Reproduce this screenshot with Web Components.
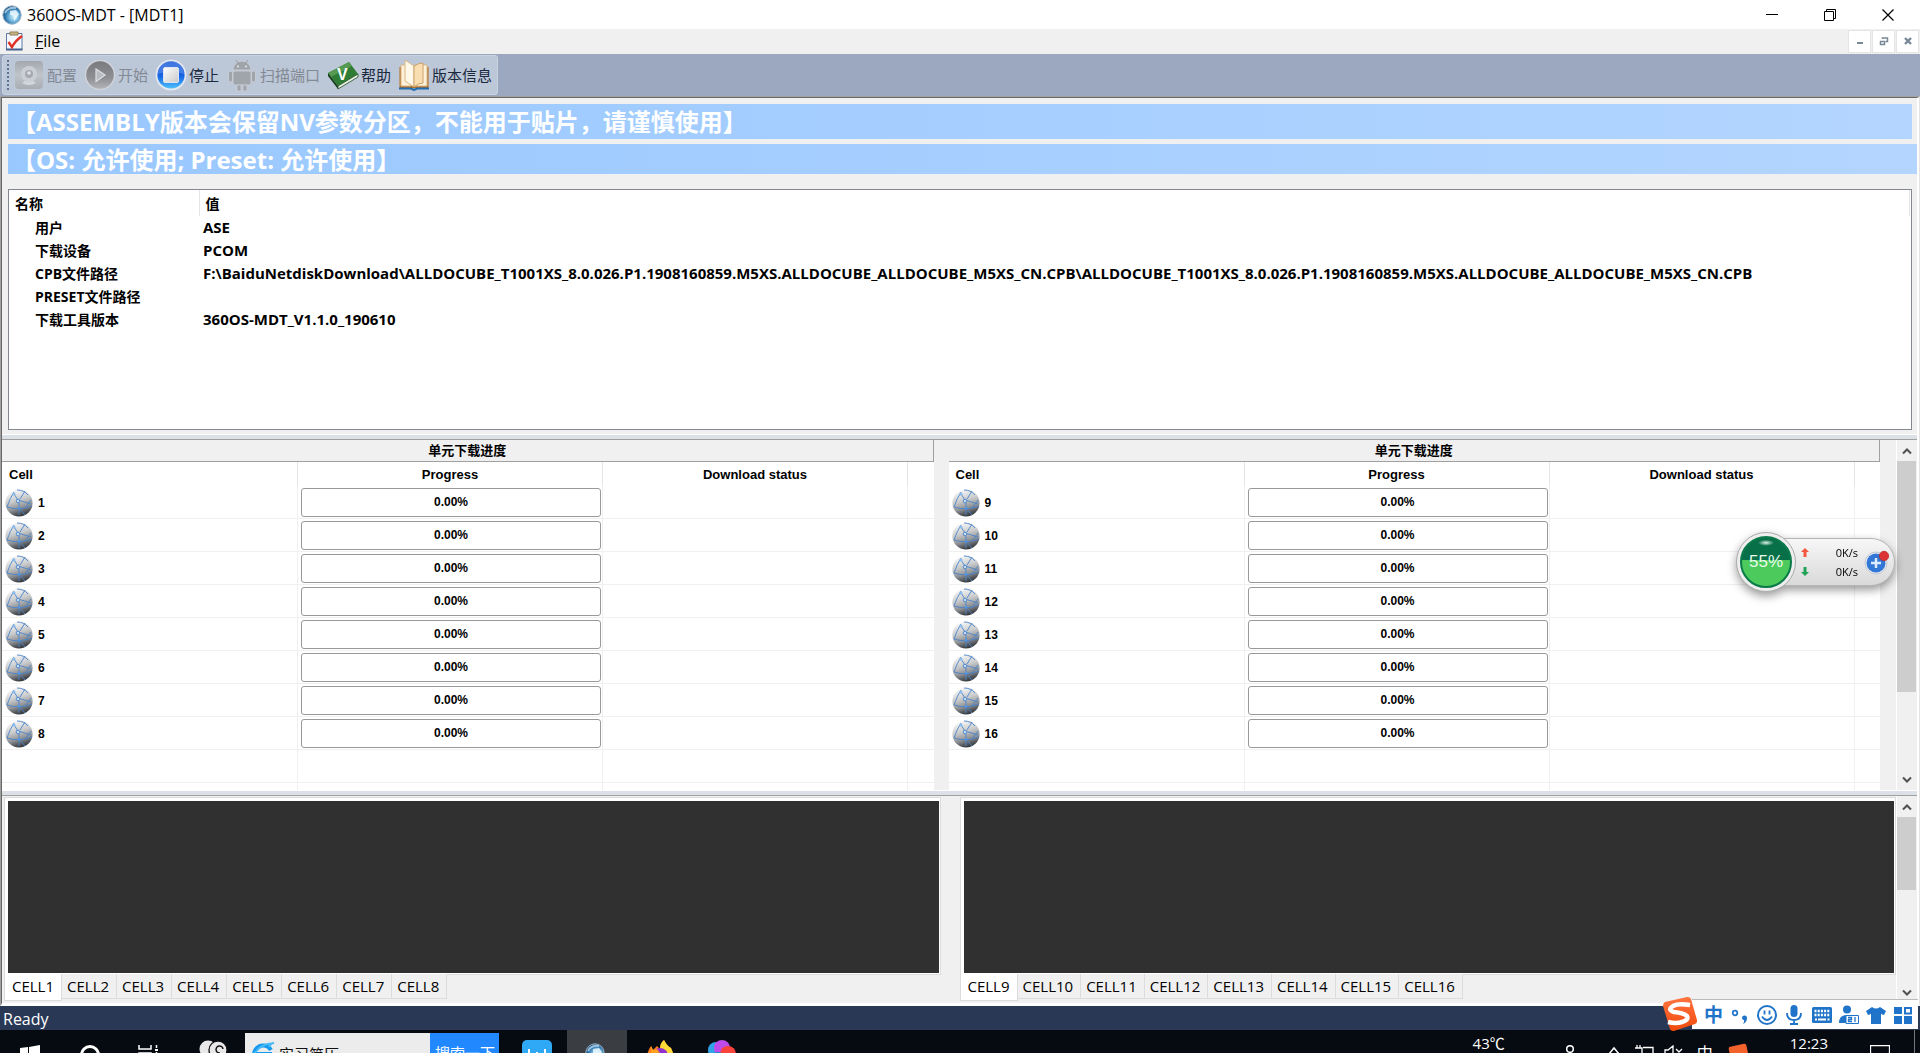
<!DOCTYPE html>
<html lang="zh-CN">
<head>
<meta charset="utf-8">
<title>360OS-MDT - [MDT1]</title>
<style>
    html, body { margin: 0; height: 100%; overflow: hidden; }
    body { font: 16px/20px "Open Sans", "Noto Sans CJK SC", sans-serif; color: #000; background: #f0f0f0; }
</style>
</head>
<body>
<desk-top></desk-top>

<script>
    const ICONS = {
        app: ['0 0 20 20', '<defs><radialGradient id="a" cx=".6" cy=".6" r=".6"><stop offset="0" stop-color="#d5effb"/><stop offset=".45" stop-color="#6fb4dd"/><stop offset=".8" stop-color="#2a70a8"/><stop offset="1" stop-color="#1b5484"/></radialGradient></defs><circle cx="10" cy="10" r="9.200" fill="url(#a)" stroke="#9fb4c6"/><path d="M8 6l6-1 3 4-3 5-2 2v-5l-4-1z" fill="#f2fbff" opacity=".8"/><path d="M3 8q3-6 11-5" stroke="#cfe4f2" stroke-width="2" fill="none" opacity=".7"/>'],
        doc: ['0 0 18 20', '<path d="M1.500 2.500h15.500v16h-15.500z" fill="#f4f7fd" stroke="#5c78a8"/><path d="M1 18.500h16.500" stroke="#45618f" stroke-width="2"/><path d="M5 1h8v3h-8z" fill="#c8b684" stroke="#8e7f56"/><path d="M3.500 11l3.500 5q3-6 10-11" stroke="#e03127" stroke-width="2.500" fill="none"/>'],
        min: ['0 0 14 14', '<path d="M1 6.500h12" stroke="#000"/>'],
        restore: ['0 0 14 14', '<path d="M1.500 3.500h9v9h-9zM3.500 3v-1.500h9v9h-2" fill="none" stroke="#000"/>'],
        close: ['0 0 14 14', '<path d="M1.500 1.500l11 11M12.500 1.500l-11 11" stroke="#000" stroke-width="1.200"/>'],
        smin: ['0 0 10 10', '<path d="M2 7h6" stroke="#788896" stroke-width="2"/>'],
        srestore: ['0 0 10 10', '<path d="M1 5.500h5M1.500 5v3.500h4v-3M3.500 3v-1h5v3.500h-2" fill="none" stroke="#788896" stroke-width="1.500"/>'],
        sclose: ['0 0 10 10', '<path d="M2 2l6 6M8 2l-6 6" stroke="#788896" stroke-width="2.400"/>'],
        camera: ['0 0 30 30', '<defs><linearGradient id="c" x2="0" y2="1"><stop offset="0" stop-color="#a4a8ae"/><stop offset=".5" stop-color="#bfc4ca"/><stop offset="1" stop-color="#a9adb3"/></linearGradient></defs><rect x="1" y="1" width="28" height="28" rx="4" fill="url(#c)"/><path d="M8 23q7-7 14 0-7 4-14 0z" fill="#d3d7dc"/><circle cx="15" cy="14" r="8" fill="#cbcfd5"/><circle cx="15" cy="14" r="4" fill="#a6aab0"/><circle cx="15" cy="13" r="1.800" fill="#dfe1e4"/>'],
        play: ['0 0 32 32', '<defs><linearGradient id="p" x2="0" y2="1"><stop offset="0" stop-color="#77797d"/><stop offset=".6" stop-color="#8d8f93"/><stop offset="1" stop-color="#b4b6ba"/></linearGradient></defs><circle cx="16" cy="16" r="14.500" fill="url(#p)" stroke="#cfd3d9" stroke-width="1.500"/><path d="M12 10l9 6-9 6.500z" fill="#b8bbc0" stroke="#dcdfe3" stroke-width="1.200"/>'],
        stop: ['0 0 32 32', '<defs><linearGradient id="s" x2="0" y2="1"><stop offset="0" stop-color="#0c3eb8"/><stop offset=".55" stop-color="#1767e4"/><stop offset="1" stop-color="#54c9ff"/></linearGradient><linearGradient id="t" x2="1" y2="1"><stop offset="0" stop-color="#fff"/><stop offset="1" stop-color="#c9c9cb"/></linearGradient></defs><circle cx="16" cy="16" r="14.500" fill="url(#s)" stroke="#e3e8f0" stroke-width="1.800"/><path d="M3 15a13 13 0 0126 0q-13-5-26 0z" fill="#5d91ef" opacity=".65"/><rect x="8.500" y="8.500" width="15" height="15" rx="1.500" fill="url(#t)" stroke="#dfe6f3"/>'],
        android: ['0 0 30 34', '<g fill="#a0a5ac" stroke="#ccd1d8" stroke-width=".8"><path d="M6 12a9 9 0 0118 0z"/><rect x="6" y="13" width="18" height="14" rx="2"/><rect x="1.500" y="13" width="4" height="11" rx="2"/><rect x="24.500" y="13" width="4" height="11" rx="2"/><path d="M10 27h4v6h-4zM16 27h4v6h-4z"/></g><path d="M9 2l2.500 3.500M21 2l-2.500 3.500" stroke="#9a9fa6"/><circle cx="11" cy="8.500" r="1" fill="#e4e7eb"/><circle cx="19" cy="8.500" r="1" fill="#e4e7eb"/>'],
        help: ['0 0 32 30', '<path d="M1 13l21-11 9 12-20 12z" fill="#2f7c34"/><path d="M1 13l21-11 3 4-21 11z" fill="#569a52"/><path d="M1 13l10 13v3l-10-13z" fill="#143d19"/><path d="M11 26l20-12v3l-20 12z" fill="#e7eee2" stroke="#1d4d22" stroke-width=".8"/><text x="10" y="20" font-family="Liberation Sans" font-weight="bold" font-size="16" fill="#fff">V</text>'],
        book: ['0 0 32 32', '<path d="M1.500 8h29v21h-29z" fill="#b06d24"/><path d="M3 6h10v21h-10zM17 6h12v21h-12z" fill="#fdf1da" stroke="#d8b888"/><path d="M7 1l9 6v21l-9-6z" fill="#fff8e8" stroke="#d9b684"/><path d="M16 7q5-3 9-3v20q-5 0-9 4z" fill="#f9deb2" stroke="#cda269"/><path d="M1 29.500h12l3 1.500 3-1.500h12" fill="none" stroke="#236cae" stroke-width="2"/>'],
        globe: ['0 0 28 28', '<defs><linearGradient id="g" x1=".35" x2=".65" y2="1"><stop offset="0" stop-color="#fafafa"/><stop offset=".4" stop-color="#c8c9ca"/><stop offset=".68" stop-color="#8c8f93"/><stop offset=".85" stop-color="#54585d"/><stop offset="1" stop-color="#2a2d31"/></linearGradient></defs><circle cx="14" cy="14" r="13.600" fill="url(#g)"/><path d="M9 3Q5 9 2 18M20 2l-5 8M13 11l-4-6M13 11l13 4M14 14v12M2 18q12 4 25-1M14 19l6 7M26 11l-6 8M12 1q7 0 11 5" fill="none" stroke="#4a83cb" stroke-width=".9"/><circle cx="9" cy="5" r="1.600" fill="#8cbdec"/><circle cx="13" cy="12" r="1.800" fill="#c4dff5" stroke="#3f79c4" stroke-width=".8"/><circle cx="14" cy="19" r="1.300" fill="#5798df"/>'],
        up: ['0 0 12 12', '<path d="M2 8.500l4-4 4 4" fill="none" stroke="#505050" stroke-width="2"/>'],
        down: ['0 0 12 12', '<path d="M2 3.500l4 4 4-4" fill="none" stroke="#505050" stroke-width="2"/>'],
        sogou: ['0 0 36 36', '<defs><linearGradient id="o" x2="0" y2="1"><stop offset="0" stop-color="#ff7440"/><stop offset="1" stop-color="#f04a0c"/></linearGradient></defs><path d="M3 6l22-5q3-.5 4 2l6 21q.5 3-2 4l-21 7q-3 .5-4-2l-7-23q0-3 2-4z" fill="url(#o)"/><path d="M28 9q-12-2-17 1-6 4 1 6 10 1 13 4 2 4-5 6-6 2-14 0" fill="none" stroke="#fff" stroke-width="4.500"/>'],
        punct: ['0 0 20 20', '<circle cx="5" cy="8" r="2.300" fill="none" stroke="#1f74c9" stroke-width="1.700"/><path d="M12 13a2.500 2.500 0 115 0q0 4-4 6 1.500-2 1-4-2 0-2-2z" fill="#1f74c9"/>'],
        smile: ['0 0 20 20', '<circle cx="10" cy="10" r="9" fill="none" stroke="#1f74c9" stroke-width="2"/><path d="M7.500 5.500v4M12.500 5.500v4M5 11.500q5 7 10 0" fill="none" stroke="#1f74c9" stroke-width="1.800"/>'],
        mic: ['0 0 20 20', '<rect x="6.500" y="0" width="7" height="12" rx="3.500" fill="#1f74c9"/><path d="M3 8q0 7 7 7t7-7M10 15v4M6 19h8" fill="none" stroke="#1f74c9" stroke-width="1.800"/>'],
        keyboard: ['0 0 20 20', '<rect x="0" y="2" width="20" height="16" rx="1.500" fill="#1f74c9"/><path d="M2.500 6h15M2.500 10h15" stroke="#fff" stroke-width="2.500" stroke-dasharray="2 1.200"/><path d="M3 14.500h2M6 14.500h8M15.500 14.500h2" stroke="#fff" stroke-width="2"/>'],
        user: ['0 0 20 20', '<circle cx="8" cy="4.500" r="4" fill="#1f74c9"/><path d="M0 18q0-8 8-8t8 4v4z" fill="#1f74c9"/><path d="M7 10.500h12.500v8h-12.500z" fill="#fff" stroke="#1f74c9"/><path d="M9 12.500h3.500v2h-3v2h3.500M16 12v5" stroke="#1f74c9" stroke-width="1.300" fill="none"/>'],
        shirt: ['0 0 20 20', '<path d="M6 2q4 3 8 0l6 4-2 4-3-1v10h-10v-10l-3 1-2-4z" fill="#1f74c9"/>'],
        tiles: ['0 0 20 20', '<path d="M1 2h8v7h-8zM1 11h8v8h-8zM11 11h8v8h-8z" fill="#1f74c9"/><path d="M12 3h6v5.500h-6z" fill="none" stroke="#1f74c9" stroke-width="2"/>'],
        win: ['0 0 20 20', '<path d="M0 3l8-1v8h-8zM9 2l11-2v10h-11zM0 11h8v8l-8-1zM9 11h11v10l-11-2z" fill="#fff"/>'],
        cortana: ['0 0 20 20', '<circle cx="10" cy="10" r="8.500" fill="none" stroke="#fff" stroke-width="3"/>'],
        taskview: ['0 0 24 20', '<path d="M1 0v4h12v-4M1 20v-12h12v12M18.500 0v3M18.500 7v13" fill="none" stroke="#fff" stroke-width="1.500"/><path d="M17 4h3v2h-3z" fill="#fff"/>'],
        bubbles: ['0 0 28 26', '<circle cx="9" cy="9" r="8.500" fill="#e8e8e8"/><circle cx="19" cy="10" r="9" fill="#e8e8e8" stroke="#111" stroke-width="1.300"/><path d="M24 9a3.500 3.500 0 10-3 4" fill="none" stroke="#111" stroke-width="1.500"/>'],
        ie: ['0 0 24 24', '<path d="M21 14a9 9 0 11-1-6M4 12h17" fill="none" stroke="#1598ef" stroke-width="4"/><path d="M1 17q5-15 22-16-3 0-5 4" fill="none" stroke="#49baf8" stroke-width="2"/>'],
        office: ['0 0 30 30', '<rect width="30" height="30" rx="5" fill="#2fa8f5"/><path d="M7 9v12h16v-12M15 12v9" fill="none" stroke="#fff" stroke-width="2"/>'],
        fox: ['0 0 28 28', '<path d="M1 28q-2-14 4-22l2 4 4-4 3 3q0-6 4-9 3 6 7 8 4 8 2 20z" fill="#ff7b1c"/><path d="M14 9q0-6 4-9 3 6 7 8 4 8 2 14h-9z" fill="#ffdb37"/><circle cx="14" cy="16" r="8" fill="#9030cf"/><path d="M5 6l2 4 4-1 3 4q-6-1-9 5z" fill="#ffa31f"/>'],
        petals: ['0 0 28 28', '<circle cx="8" cy="10" r="8" fill="#31a4e8"/><circle cx="14" cy="8" r="8" fill="#bf4bea"/><circle cx="20" cy="14" r="8" fill="#f9433c"/><circle cx="10" cy="20" r="8" fill="#1984d0"/>'],
        people: ['0 0 20 20', '<circle cx="13" cy="4" r="3.300" fill="none" stroke="#fff" stroke-width="1.500"/><path d="M7 14q0-5 6-5t6 5" fill="none" stroke="#fff" stroke-width="1.500"/><path d="M2 9h4" fill="none" stroke="#fff"/>'],
        caret: ['0 0 14 14', '<path d="M2 9l5-6 5 6" fill="none" stroke="#fff" stroke-width="1.500"/>'],
        battery: ['0 0 20 14', '<path d="M3 0v3M6 0v3M1 3h7v5M9 2.500h10v8h-12" fill="none" stroke="#fff" stroke-width="1.300"/>'],
        volume: ['0 0 20 14', '<path d="M1 5h3l5-4v12l-5-4h-3zM12 4l6 6M18 4l-6 6" fill="none" stroke="#fff" stroke-width="1.300"/>'],
        note: ['0 0 20 20', '<path d="M.500.500h19v14h-5l-3 4v-4h-11z" fill="none" stroke="#fff" stroke-width="1.300"/>'],
        plus: ['0 0 26 26', '<circle cx="12" cy="14" r="11" fill="#e8edf5" stroke="#c4c8ce"/><circle cx="12" cy="14" r="9.500" fill="#3276d6"/><path d="M12 9v10M7 14h10" stroke="#dcebff" stroke-width="2.500"/><circle cx="20" cy="7" r="4.700" fill="#dc3434" stroke="#b92323" stroke-width=".7"/>'],
        upload: ['0 0 8 10', '<path d="M4 0l4 4h-2.500v5h-3v-5h-2.500z" fill="#f3563c"/>'],
        download: ['0 0 8 10', '<path d="M4 9l4-4h-2.500v-5h-3v5h-2.500z" fill="#1fa355"/>']
    };

    // every component renders its own template into an open root
    class BaseElement extends HTMLElement{
        constructor(){
            super();
            this.attachShadow({mode: 'open'});
        }
        connectedCallback(){
            const template = document.createElement('template');
            template.innerHTML = '<style>' +
            '* { box-sizing: border-box; } button { font: inherit; color: inherit; margin: 0; padding: 0; border: 0; background: none; border-radius: 0; }' +
            '</style>' + this.render();
            this.shadowRoot.replaceChildren(template.content.cloneNode(true));
        }
    }

    class UiIcon extends BaseElement{
        render(){
            const [box, shape] = ICONS[this.getAttribute('name')];
            const [, , w, h] = box.split(' ');
            return `<style>:host { display: block; flex: none; } svg { display: block; }</style>
            <svg width="${w}" height="${h}" viewBox="${box}" aria-hidden="true">${shape}</svg>`;
        }
    }

    class TitleBar extends BaseElement{
        render(){
            return `<style>
                :host { display: flex; align-items: center; height: 29px; padding: 0 3px 0 2px; background: #fff; }
                .title { flex: 1; padding-left: 5px; }
                button { display: flex; width: 58px; height: 28px; align-items: center; justify-content: center; }
            </style>
            <ui-icon name="app"></ui-icon>
            <span class="title"><slot></slot></span>
            <button aria-label="Minimize"><ui-icon name="min"></ui-icon></button>
            <button aria-label="Restore"><ui-icon name="restore"></ui-icon></button>
            <button aria-label="Close"><ui-icon name="close"></ui-icon></button>`;
        }
    }

    class MenuBar extends BaseElement{
        render(){
            return `<style>
                :host { display: flex; align-items: center; height: 25px; padding: 0 1px 1px 5px; gap: 1px; background: #f0f0f0; }
                .file { margin: 0 auto 0 11px; }
                .mdi { display: flex; width: 23px; height: 23px; align-items: center; justify-content: center; background: #fff; border: 1px solid #e5e5e5; }
            </style>
            <ui-icon name="doc"></ui-icon>
            <button class="file"><u>F</u>ile</button>
            <button class="mdi" aria-label="Minimize"><ui-icon name="smin"></ui-icon></button>
            <button class="mdi" aria-label="Restore"><ui-icon name="srestore"></ui-icon></button>
            <button class="mdi" aria-label="Close"><ui-icon name="sclose"></ui-icon></button>`;
        }
    }

    class ToolButton extends BaseElement{
        render(){
            const off = this.hasAttribute('disabled');
            return `<style>
                :host { display: block; }
                button { display: flex; align-items: center; gap: 2px; height: 36px; font-size: 15px; color: ${off ? '#838a94' : '#1b293e'}; }
                .pic { display: flex; width: 32px; justify-content: center; }
            </style>
            <button ${off ? 'disabled' : ''}><span class="pic"><ui-icon name="${this.getAttribute('icon')}"></ui-icon></span><slot></slot></button>`;
        }
    }

    class ToolBar extends BaseElement{
        render(){
            return `<style>
                :host { display: flex; height: 42px; padding: 1px 2px; background: #9ba8c0; }
                .strip { display: flex; align-items: center; gap: 7px; padding: 0 5px 0 4px; background: #bcc7d8; border: 1px solid #c9d2e0; border-radius: 3px; }
                .grip { width: 2px; height: 30px; margin-right: -3px; background: repeating-linear-gradient(#5f7190 0 2px, transparent 2px 4px); }
            </style>
            <div class="strip"><span class="grip"></span><slot></slot></div>`;
        }
    }

    class DeviceInfo extends BaseElement{
        render(){
            const path = 'ALLDOCUBE_T1001XS_8.0.026.P1.1908160859.M5XS.ALLDOCUBE_ALLDOCUBE_M5XS_CN.CPB';
            const rows = [['用户', 'ASE'], ['下载设备', 'PCOM'],
                ['CPB文件路径', 'F:\\BaiduNetdiskDownload\\' + path + '\\' + path],
                ['PRESET文件路径', ''], ['下载工具版本', '360OS-MDT_V1.1.0_190610']];
            return `<style>
                :host { display: block; height: 241px; background: #fff; border: 1px solid #828790; overflow: hidden; }
                table { width: 100%; border-collapse: collapse; table-layout: fixed; font-weight: bold; font-size: 14px; text-align: left; }
                th, td { padding: 0; height: 23px; line-height: 23px; white-space: nowrap; }
                th { height: 26px; font-weight: bold; padding-left: 6px; border-right: 1px solid #e5e5e5; }
                td:first-child { padding-left: 26px; }
                td + td { padding-left: 4px; font-size: 15px; }
                .name { width: 190px; }
                .end { width: 2px; }
            </style>
            <table>
                <colgroup><col class="name"><col><col class="end"></colgroup>
                <thead><tr><th>名称</th><th>值</th></tr></thead>
                <tbody>${rows.map(r => `<tr><td>${r[0]}</td><td>${r[1]}</td></tr>`).join('')}</tbody>
            </table>`;
        }
    }

    class CellTable extends BaseElement{
        render(){
            const first = Number(this.getAttribute('first'));
            let rows = '';
            for(let i = first; i < first + 8; i++){
                rows += `<tr><td><span class="cell"><ui-icon name="globe"></ui-icon>${i}</span></td>` +
                    `<td><div class="bar" role="progressbar" aria-valuenow="0" aria-label="Cell ${i}">0.00%</div></td><td></td><td></td></tr>`;
            }
            return `<style>
                :host { display: block; min-width: 0; background: #fff; font-family: "Liberation Sans", "Noto Sans CJK SC", sans-serif; }
                table { width: 100%; border-collapse: separate; border-spacing: 0; table-layout: fixed; font-weight: bold; font-size: 12px; }
                caption { height: 22px; line-height: 21px; font-size: 13px; background: #f0f0f0; border: solid #a0a0a0; border-width: 0 1px 1px 0; }
                th { height: 24px; padding: 1px 0 0; font-size: 13px; line-height: 20px; border-right: 1px solid #e5e5e5; }
                th:first-child { text-align: left; padding-left: 7px; }
                td { height: 33px; padding: 1px 1px 0 3px; border: solid #f0f0f0; border-width: 0 1px 1px 0; }
                th:last-child, td:last-child { border-right: 0; }
                .rest td { height: 7px; border-bottom: 0; }
                .cell { display: flex; align-items: center; gap: 5px; }
                .bar { height: 29px; line-height: 27px; border: 1px solid #999; border-radius: 3px; text-align: center; }
            </style>
            <table>
                <caption>单元下载进度</caption>
                <colgroup><col style="width: 296px"><col style="width: 305px"><col style="width: 305px"><col></colgroup>
                <thead><tr><th>Cell</th><th>Progress</th><th>Download status</th><th></th></tr></thead>
                <tbody>${rows}<tr><td></td><td></td><td></td><td></td></tr>
                <tr class="rest"><td></td><td></td><td></td><td></td></tr></tbody>
            </table>`;
        }
    }

    class ScrollStrip extends BaseElement{
        render(){
            return `<style>
                :host { display: flex; flex-direction: column; flex: none; width: 21px; background: #f0f0f0; border: solid #fff; border-width: 0 0 0 1px; padding-right: 1px; }
                button { display: flex; flex: none; height: 21px; align-items: center; justify-content: center; }
                .track { flex: 1; }
                .thumb { background: #cdcdcd; height: ${this.getAttribute('thumb')}; }
            </style>
            <button aria-label="Scroll up"><ui-icon name="up"></ui-icon></button>
            <div class="track"><div class="thumb"></div></div>
            <button aria-label="Scroll down"><ui-icon name="down"></ui-icon></button>`;
        }
    }

    class LogTabs extends BaseElement{
        render(){
            const first = Number(this.getAttribute('first'));
            let tabs = '';
            for(let i = first; i < first + 8; i++){
                tabs += `<button role="tab" aria-selected="${i == first}">CELL${i}</button>`;
            }
            return `<style>
                :host { display: flex; flex-direction: column; min-width: 0; }
                .pane { flex: 1; display: flex; padding: 3px 1px 1px 3px; background: #fff; border: solid #dcdcdc; border-width: 1px 1px 0 1px; }
                textarea { flex: 1; min-width: 0; padding: 4px; border: 0; resize: none; outline: 0; background: #303030; color: #fff; font: 14px/18px "Liberation Mono", monospace; }
                .tabs { display: flex; align-items: flex-start; height: 27px; font-size: 15px; }
                .tabs::after { content: ""; flex: 1; border-top: 1px solid #dcdcdc; }
                button { height: 25px; padding: 0 7px 0 5px; border: solid #dcdcdc; border-width: 0 1px 1px 0; }
                button[aria-selected=true] { height: 27px; padding: 0 7px 2px 7px; background: #fff; border-left-width: 1px; }
            </style>
            <div class="pane"><textarea readonly aria-label="Log"></textarea></div>
            <div class="tabs" role="tablist">${tabs}</div>`;
        }
    }

    class MdiChild extends BaseElement{
        render(){
            return `<style>
                :host { display: flex; flex-direction: column; flex: 1; min-height: 0; background: #f0f0f0; border: 1px solid #a0a0a0; border-right-color: #e3e3e3; border-bottom-color: #fff; }
                .inner { display: flex; flex-direction: column; flex: 1; border: 1px solid #696969; border-width: 1px 2px 2px 1px; border-right-color: #fff; border-bottom-color: #fff; }
                .info { padding: 6px 5px 4px 6px; }
                .banner { height: 35px; padding-left: 4px; line-height: 36px; font-size: 24px; font-weight: bold; color: #fff; background: linear-gradient(90deg, #99c8ff, #b3d5ff); white-space: nowrap; }
                .second { height: 30px; line-height: 32px; margin: 5px -5px 15px 0; }
                .split { height: 6px; background: #dce1e7; border: solid #fff; border-width: 1px 0 0; border-bottom: 1px solid #a0a0a0; }
                .row { display: flex; }
                .pair { flex: 1; min-width: 0; display: grid; grid-template-columns: 1fr 1fr; gap: 15px; padding-right: 16px; }
                .logs { flex: 1; }
                .logs .pair { gap: 19px; padding: 1px 0 2px 2px; }
            </style>
            <div class="inner">
                <div class="info">
                    <div class="banner">【ASSEMBLY版本会保留NV参数分区，不能用于贴片，请谨慎使用】</div>
                    <div class="banner second">【OS: 允许使用; Preset: 允许使用】</div>
                    <device-info></device-info>
                </div>
                <div class="split"></div>
                <div class="row">
                    <div class="pair"><cell-table first="1"></cell-table><cell-table first="9"></cell-table></div>
                    <scroll-strip thumb="75%"></scroll-strip>
                </div>
                <div class="split"></div>
                <div class="row logs">
                    <div class="pair"><log-tabs first="1"></log-tabs><log-tabs first="9"></log-tabs></div>
                    <scroll-strip thumb="44%"></scroll-strip>
                </div>
            </div>`;
        }
    }

    class TaskBar extends BaseElement{
        render(){
            return `<style>
                :host { display: flex; flex: none; height: 23px; overflow: hidden; background: #060b12; color: #fff; align-items: flex-start; }
                button { flex: none; display: flex; justify-content: center; width: 60px; height: 50px; padding-top: 15px; }
                button.app { padding-top: 10px; }
                .chat { width: 65px; }
                .on { background: #3a3e42; }
                .on ui-icon { margin: 3px 5px 0 0; }
                .search { display: flex; height: 40px; margin: 3px 8px 0 0; font-size: 15px; }
                .search label { display: flex; align-items: flex-start; width: 185px; padding: 9px 0 0 6px; gap: 4px; background: #ececec; }
                input { width: 140px; border: 0; padding: 0; background: none; font: inherit; line-height: 24px; height: 24px; color: #111; }
                .search button { width: 69px; height: 40px; padding: 10px 0 0 5px; justify-content: flex-start; background: #2188ff; white-space: nowrap; overflow: hidden; }
                .tray { display: flex; margin-left: auto; padding-right: 5px; align-items: flex-start; }
                .tray > * { margin-top: 15px; }
                .tray .text { margin-top: 4px; font-size: 15px; line-height: 18px; }
                .people { margin-left: 52px; }
                .caret { margin-left: 30px; }
                .battery { margin-left: 13px; }
                .volume { margin-left: 10px; }
                .ime { margin: 13px 0 0 13px; }
                .mini { width: 18px; height: 18px; margin-left: 17px; background: #f4622c; border-radius: 2px; rotate: -12deg; }
                .tray .clock { padding: 0 42px; }
                .desk { width: 1px; height: 30px; margin: 0 0 0 24px; background: #777; }
            </style>
            <button aria-label="Start"><ui-icon name="win"></ui-icon></button>
            <button aria-label="Cortana"><ui-icon name="cortana"></ui-icon></button>
            <button aria-label="Task view"><ui-icon name="taskview"></ui-icon></button>
            <button aria-label="Chat" class="app chat"><ui-icon name="bubbles"></ui-icon></button>
            <div class="search"><label><ui-icon name="ie"></ui-icon><input value="实习简历" aria-label="Search"></label><button>搜索一下</button></div>
            <button class="app" aria-label="Office"><ui-icon name="office"></ui-icon></button>
            <button class="app on" aria-label="360OS-MDT"><ui-icon name="app"></ui-icon></button>
            <button class="app chat" aria-label="Browser"><ui-icon name="fox"></ui-icon></button>
            <button class="app" aria-label="Photos"><ui-icon name="petals"></ui-icon></button>
            <div class="tray">
                <span class="text">43℃</span>
                <ui-icon class="people" name="people"></ui-icon>
                <ui-icon class="caret" name="caret"></ui-icon>
                <ui-icon class="battery" name="battery"></ui-icon>
                <ui-icon class="volume" name="volume"></ui-icon>
                <span class="ime">中</span>
                <span class="mini"></span>
                <time class="text clock">12:23</time>
                <ui-icon name="note"></ui-icon>
                <span class="desk"></span>
            </div>`;
        }
    }

    // input method bar, floats over the status bar
    class ImeBar extends BaseElement{
        render(){
            const names = ['punct', 'smile', 'mic', 'keyboard', 'user', 'shirt', 'tiles'];
            return `<style>
                :host { position: absolute; right: 2px; bottom: 21px; display: flex; align-items: center; }
                .logo { position: relative; z-index: 1; margin-right: -6px; }
                .bar { display: flex; align-items: center; justify-content: space-between; width: 226px; height: 30px; padding: 0 5px 0 12px; background: #fff; border-top: 1px solid #bbb; color: #1f74c9; font-weight: bold; font-size: 19px; }
            </style>
            <ui-icon class="logo" name="sogou"></ui-icon>
            <div class="bar"><button>中</button>${names.map(n => `<button aria-label="${n}"><ui-icon name="${n}"></ui-icon></button>`).join('')}</div>`;
        }
    }

    // memory ball with network speeds
    class SpeedBall extends BaseElement{
        render(){
            return `<style>
                :host { position: absolute; right: 25px; top: 532px; display: flex; align-items: center; filter: drop-shadow(0 4px 5px #0006); }
                .ball { position: relative; z-index: 1; width: 60px; height: 60px; margin-right: -30px; border-radius: 50%; border: 1px solid #aaa; background: #eee; padding: 3px; }
                .fill { height: 52px; border-radius: 50%; border: 2px solid #0b7a4a; background: radial-gradient(ellipse 8px 3px at 50% 10%, #dff5ea, transparent), linear-gradient(#087048 0 45%, #4ccb5c 45%); color: #e9fbef; font: 17px/48px "Liberation Sans", sans-serif; text-align: center; }
                .pill { display: flex; align-items: center; width: 129px; height: 48px; padding: 0 4px 0 34px; border: 1px solid #b5b5b5; border-radius: 0 24px 24px 0; background: linear-gradient(#f7f7f7, #d9d9d9); }
                .rates { flex: 1; font-size: 11px; line-height: 19px; }
                .rates div { display: flex; align-items: center; justify-content: space-between; padding-right: 6px; }
            </style>
            <div class="ball"><div class="fill">55%</div></div>
            <div class="pill">
                <div class="rates"><div><ui-icon name="upload"></ui-icon>0K/s</div><div><ui-icon name="download"></ui-icon>0K/s</div></div>
                <button aria-label="Boost"><ui-icon name="plus"></ui-icon></button>
            </div>`;
        }
    }

    class DeskTop extends BaseElement{
        render(){
            return `<style>
                :host { position: relative; display: flex; flex-direction: column; height: 100vh; overflow: hidden; }
                .status { flex: none; height: 24px; line-height: 26px; padding-left: 3px; background: #293955; color: #fff; }
            </style>
            <title-bar>360OS-MDT - [MDT1]</title-bar>
            <menu-bar></menu-bar>
            <tool-bar>
                <tool-button icon="camera" disabled>配置</tool-button>
                <tool-button icon="play" disabled>开始</tool-button>
                <tool-button icon="stop">停止</tool-button>
                <tool-button icon="android" disabled>扫描端口</tool-button>
                <tool-button icon="help">帮助</tool-button>
                <tool-button icon="book">版本信息</tool-button>
            </tool-bar>
            <mdi-child></mdi-child>
            <div class="status">Ready</div>
            <task-bar></task-bar>
            <ime-bar></ime-bar>
            <speed-ball></speed-ball>`;
        }
    }

    window.customElements.define('ui-icon', UiIcon);
    window.customElements.define('title-bar', TitleBar);
    window.customElements.define('menu-bar', MenuBar);
    window.customElements.define('tool-button', ToolButton);
    window.customElements.define('tool-bar', ToolBar);
    window.customElements.define('device-info', DeviceInfo);
    window.customElements.define('cell-table', CellTable);
    window.customElements.define('scroll-strip', ScrollStrip);
    window.customElements.define('log-tabs', LogTabs);
    window.customElements.define('mdi-child', MdiChild);
    window.customElements.define('task-bar', TaskBar);
    window.customElements.define('ime-bar', ImeBar);
    window.customElements.define('speed-ball', SpeedBall);
    window.customElements.define('desk-top', DeskTop);
</script>
</body>
</html>
